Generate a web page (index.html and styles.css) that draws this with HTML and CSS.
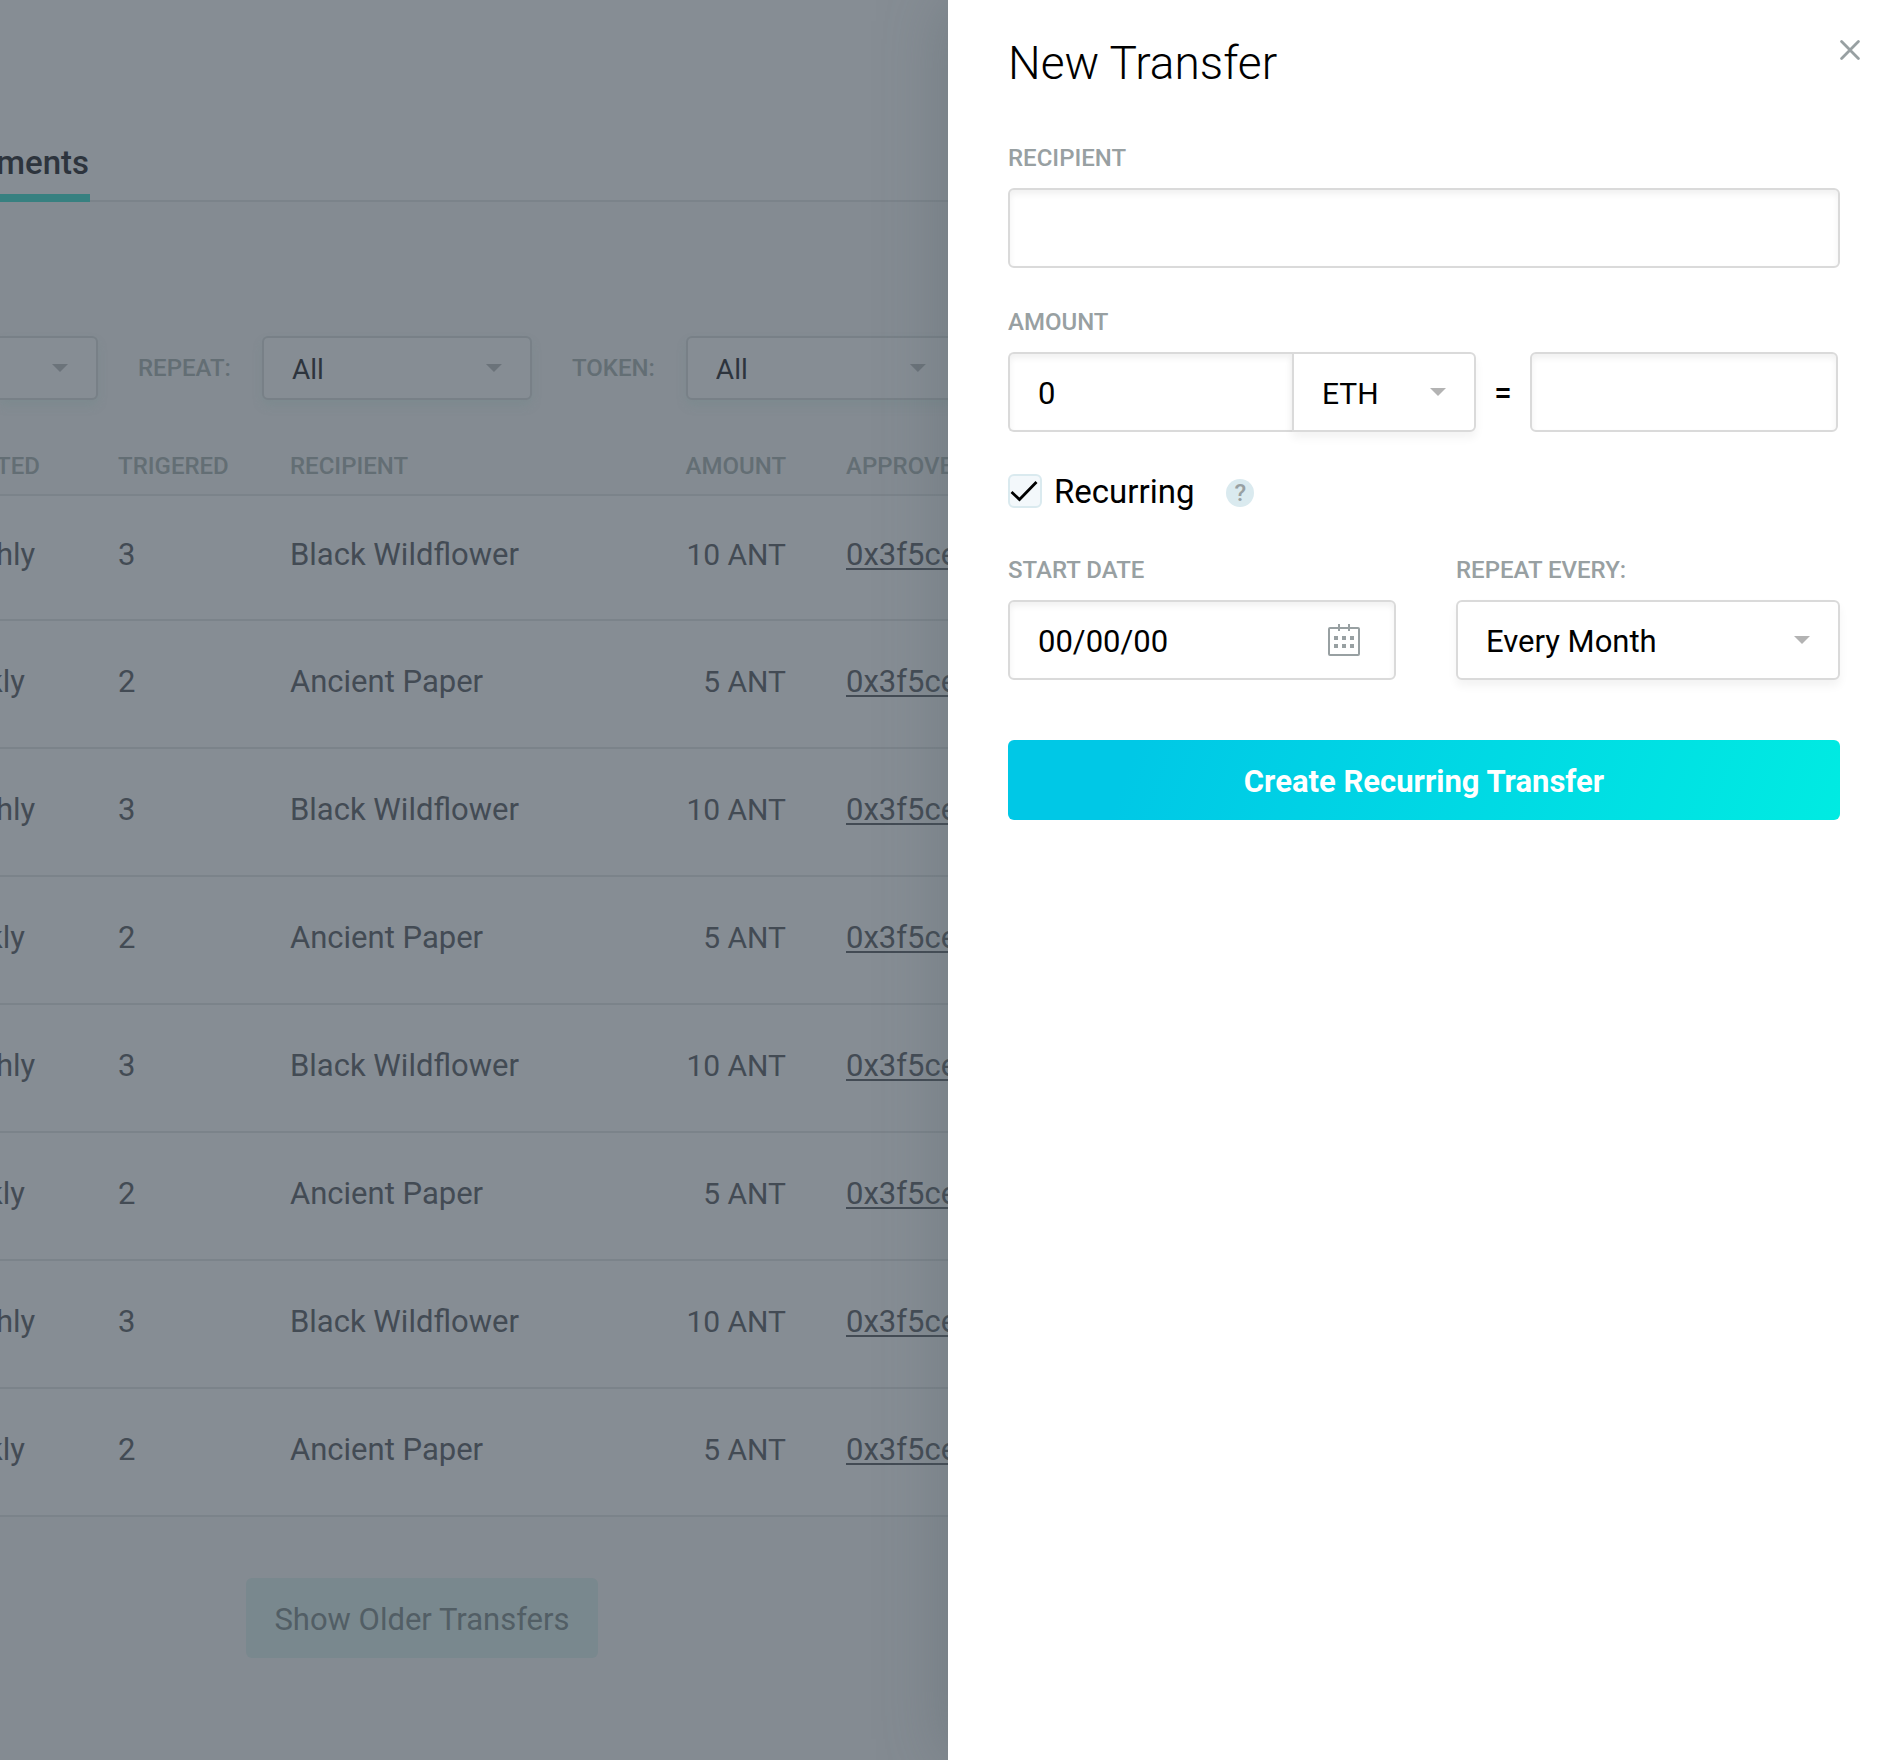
FILE: index.html
```html
<!DOCTYPE html>
<html lang="en">
<head>
<meta charset="utf-8">
<title>New Transfer</title>
<link rel="stylesheet" href="styles.css">
</head>
<body>
<div class="layout">
  <main class="app">
    <nav class="tabs"><a class="tab" href="#">ments</a></nav>
    <div class="filters">
      <div class="select select-cut"><select aria-label="Filter"><option></option></select></div>
      <label class="filter-label" for="f-repeat">REPEAT:</label>
      <div class="select"><select id="f-repeat"><option>All</option></select></div>
      <label class="filter-label" for="f-token">TOKEN:</label>
      <div class="select"><select id="f-token"><option>All</option></select></div>
    </div>
    <table class="payments">
      <colgroup><col class="c-repeat"><col class="c-count"><col class="c-name"><col class="c-amount"><col class="c-hash"></colgroup>
      <thead>
        <tr><th>TED</th><th>TRIGERED</th><th>RECIPIENT</th><th class="num">AMOUNT</th><th>APPROVE</th></tr>
      </thead>
      <tbody>
        <tr><td>hly</td><td>3</td><td>Black Wildflower</td><td class="num">10 ANT</td><td><a href="#">0x3f5ce</a></td></tr>
        <tr><td class="weekly">kly</td><td>2</td><td>Ancient Paper</td><td class="num">5 ANT</td><td><a href="#">0x3f5ce</a></td></tr>
        <tr><td>hly</td><td>3</td><td>Black Wildflower</td><td class="num">10 ANT</td><td><a href="#">0x3f5ce</a></td></tr>
        <tr><td class="weekly">kly</td><td>2</td><td>Ancient Paper</td><td class="num">5 ANT</td><td><a href="#">0x3f5ce</a></td></tr>
        <tr><td>hly</td><td>3</td><td>Black Wildflower</td><td class="num">10 ANT</td><td><a href="#">0x3f5ce</a></td></tr>
        <tr><td class="weekly">kly</td><td>2</td><td>Ancient Paper</td><td class="num">5 ANT</td><td><a href="#">0x3f5ce</a></td></tr>
        <tr><td>hly</td><td>3</td><td>Black Wildflower</td><td class="num">10 ANT</td><td><a href="#">0x3f5ce</a></td></tr>
        <tr><td class="weekly">kly</td><td>2</td><td>Ancient Paper</td><td class="num">5 ANT</td><td><a href="#">0x3f5ce</a></td></tr>
      </tbody>
    </table>
    <div class="more"><button class="btn-older" type="button">Show Older Transfers</button></div>
  </main>

  <aside class="panel">
    <header class="panel-head">
      <h1>New Transfer</h1>
      <button class="close" type="button" aria-label="Close">
        <svg width="20" height="20" viewBox="0 0 20 20"><path d="M1.6 1.6 18.4 18.4M18.4 1.6 1.6 18.4" fill="none" stroke="#98a0a2" stroke-width="2.8" stroke-linecap="round"/></svg>
      </button>
    </header>
    <form class="form">
      <div class="field">
        <label for="recipient">RECIPIENT</label>
        <input class="input" id="recipient" type="text">
      </div>
      <div class="field">
        <label for="amount">AMOUNT</label>
        <div class="amount-row">
          <input class="input amount" id="amount" type="text" value="0">
          <div class="select token"><select aria-label="Token"><option>ETH</option></select></div>
          <span class="equals">=</span>
          <input class="input" type="text" aria-label="Converted amount">
        </div>
      </div>
      <div class="recurring">
        <label class="check">
          <span class="check-box">
            <input type="checkbox" checked>
            <svg width="34" height="34" viewBox="0 0 34 34"><path d="M3.500 18 11.500 25.500 28.500 8" fill="none" stroke="#000" stroke-width="2.800"/></svg>
          </span>
          Recurring
        </label>
        <button class="help" type="button" aria-label="Help">?</button>
      </div>
      <div class="dates">
        <div class="field">
          <label for="start">START DATE</label>
          <div class="date">
            <input class="input" id="start" type="text" value="00/00/00">
            <svg width="32" height="32" viewBox="0 0 32 32" fill="none" stroke="#98a0a2" stroke-width="2">
              <rect x="1" y="4" width="30" height="27" rx="1"/>
              <path d="M11 0v7M21 0v7"/>
              <path d="M6 14h4M14 14h4M22 14h4M6 22h4M14 22h4M22 22h4" stroke-width="4"/>
            </svg>
          </div>
        </div>
        <div class="field">
          <label for="every">REPEAT EVERY:</label>
          <div class="select"><select id="every"><option>Every Month</option></select></div>
        </div>
      </div>
      <button class="submit" type="submit">Create Recurring Transfer</button>
    </form>
  </aside>
</div>
</body>
</html>
```
FILE: styles.css
```css
* { box-sizing: border-box; }

body {
  margin: 0;
  font-family: Roboto, "Liberation Sans", sans-serif;
  font-size: 31px;
  color: #000;
  background: #848b92;
}

button, input, select { font: inherit; color: inherit; margin: 0; }

.layout {
  display: grid;
  grid-template-columns: 948fr 952fr;
  min-height: 100vh;
}

/* Page behind the panel, dimmed */
.app {
  min-width: 0;
  overflow: hidden;
  background: #848b92;
  color: #434b54;
}

.tabs {
  display: flex;
  align-items: flex-end;
  height: 202px;
  background: #868d94;
  box-shadow: inset 0 -2px #7b838a;
}

.tab {
  width: 90px;
  display: flex;
  justify-content: flex-end;
  padding: 0 1px 12px 0;
  border-bottom: 8px solid #378080;
  font-size: 33px;
  font-weight: 500;
  line-height: 38px;
  color: #2d343d;
  text-decoration: none;
}

.filters {
  display: flex;
  align-items: center;
  padding-top: 134px;
}

.filter-label {
  flex: none;
  padding: 0 31px 0 40px;
  font-size: 24px;
  font-weight: 500;
  color: #636e74;
}

.select { display: grid; align-items: center; }

.select select,
.select::after { grid-area: 1 / 1; }

.select select {
  appearance: none;
  width: 100%;
  height: 80px;
  padding: 2px 28px 0;
  border: 2px solid #dadada;
  border-radius: 6px;
  background: #fff;
  box-shadow: 0 6px 10px rgba(0, 0, 0, .05);
}

.select::after {
  content: "";
  justify-self: end;
  width: 16px;
  height: 8px;
  margin-right: 30px;
  background: #b3b3b3;
  clip-path: polygon(0 0, 100% 0, 50% 100%);
  pointer-events: none;
}

.filters .select { flex: none; width: 270px; }
.filters .select-cut { width: 98px; }

.filters select {
  height: 64px;
  font-size: 28px;
  color: #2d343d;
  background: #868d94;
  border-color: #788087;
  box-shadow: 0 6px 10px rgba(110, 135, 135, .3);
}

.filters .select-cut select {
  border-left: 0;
  border-radius: 0 6px 6px 0;
}

.filters .select::after { background: #6b737a; }

.payments {
  width: 1100px;
  margin-top: 36px;
  table-layout: fixed;
  border-collapse: separate;
  border-spacing: 0;
}

.c-repeat { width: 118px; }
.c-count { width: 172px; }
.c-name { width: 300px; }
.c-amount { width: 196px; }

.payments th {
  height: 60px;
  padding: 2px 0 0;
  border-bottom: 2px solid #7b838a;
  font-size: 24px;
  font-weight: 500;
  text-align: left;
  color: #636e74;
}

.payments td {
  height: 128px;
  padding: 0 0 6px;
  border-bottom: 2px solid #7b838a;
  background: #868d94;
}

.payments tr:first-child td { height: 125px; }
.payments .num { text-align: right; }
.payments td.num { font-size: 30px; }
.payments th:last-child, .payments td:last-child { padding-left: 60px; }

/* The first column runs off the left edge */
.payments th:first-child, .payments td:first-child { text-indent: -4px; }
.payments td.weekly:first-child { text-indent: -13px; }

.payments a {
  color: inherit;
  text-decoration-thickness: 2px;
  text-underline-offset: 3px;
}

.more {
  display: flex;
  justify-content: center;
  width: 844px;
  padding: 61px 0;
}

.btn-older {
  height: 80px;
  padding: 2px 28px 0;
  border: 0;
  border-radius: 6px;
  background: #79888e;
  color: #525e65;
}

/* Side panel */
.panel {
  z-index: 1;
  padding: 36px 40px 60px 60px;
  background: #fff;
  box-shadow: -4px 0 60px rgba(80, 95, 100, .35);
}

.panel-head { display: flex; justify-content: space-between; align-items: flex-start; }

h1 {
  margin: 0;
  font-size: 46px;
  line-height: 54px;
  font-weight: 300;
}

.close {
  display: flex;
  padding: 4px 0;
  border: 0;
  background: none;
}

.form { padding: 53px 20px 0 0; }

.field { display: flex; flex-direction: column; gap: 15px; }
.form > .field { margin-bottom: 39px; }

.field label {
  font-size: 24px;
  line-height: 30px;
  font-weight: 500;
  color: #98a0a2;
}

.input {
  width: 100%;
  min-width: 0;
  height: 80px;
  padding: 2px 28px 0;
  border: 2px solid #dadada;
  border-radius: 6px;
  background: #fff;
  box-shadow: inset 0 4px 6px rgba(0, 0, 0, .06);
}

.amount-row {
  display: grid;
  grid-template-columns: 284fr 184fr 54px 308fr;
  align-items: center;
  padding-right: 2px;
}

.amount { border-right: 0; border-radius: 6px 0 0 6px; }
.token select { border-radius: 0 6px 6px 0; font-size: 30px; }
.equals { text-align: center; font-weight: 500; }

.recurring { display: flex; align-items: center; gap: 32px; height: 40px; }

.check { display: flex; align-items: center; gap: 12px; font-size: 33px; }

.check-box { display: grid; }
.check-box > * { grid-area: 1 / 1; }

.check-box input {
  appearance: none;
  width: 34px;
  height: 34px;
  border: 2px solid #daeaef;
  border-radius: 6px;
  background: #f3f8fb;
}

.check-box svg { pointer-events: none; }

.help {
  width: 28px;
  height: 28px;
  margin-top: 4px;
  padding: 0;
  border: 0;
  border-radius: 50%;
  background: #daeaef;
  color: #98a0a2;
  font-size: 24px;
  line-height: 28px;
  font-weight: 500;
}

.dates {
  display: grid;
  grid-template-columns: 388fr 384fr;
  gap: 60px;
  margin-top: 44px;
}

.date { display: grid; align-items: center; }
.date > * { grid-area: 1 / 1; }
.date svg { justify-self: end; margin-right: 36px; }

.submit {
  display: block;
  width: 100%;
  height: 80px;
  margin-top: 60px;
  padding: 2px 0 0;
  border: 0;
  border-radius: 6px;
  background: linear-gradient(110deg, #00c8e6 15%, #00ebe2 100%);
  color: #fff;
  font-weight: 700;
}
```
